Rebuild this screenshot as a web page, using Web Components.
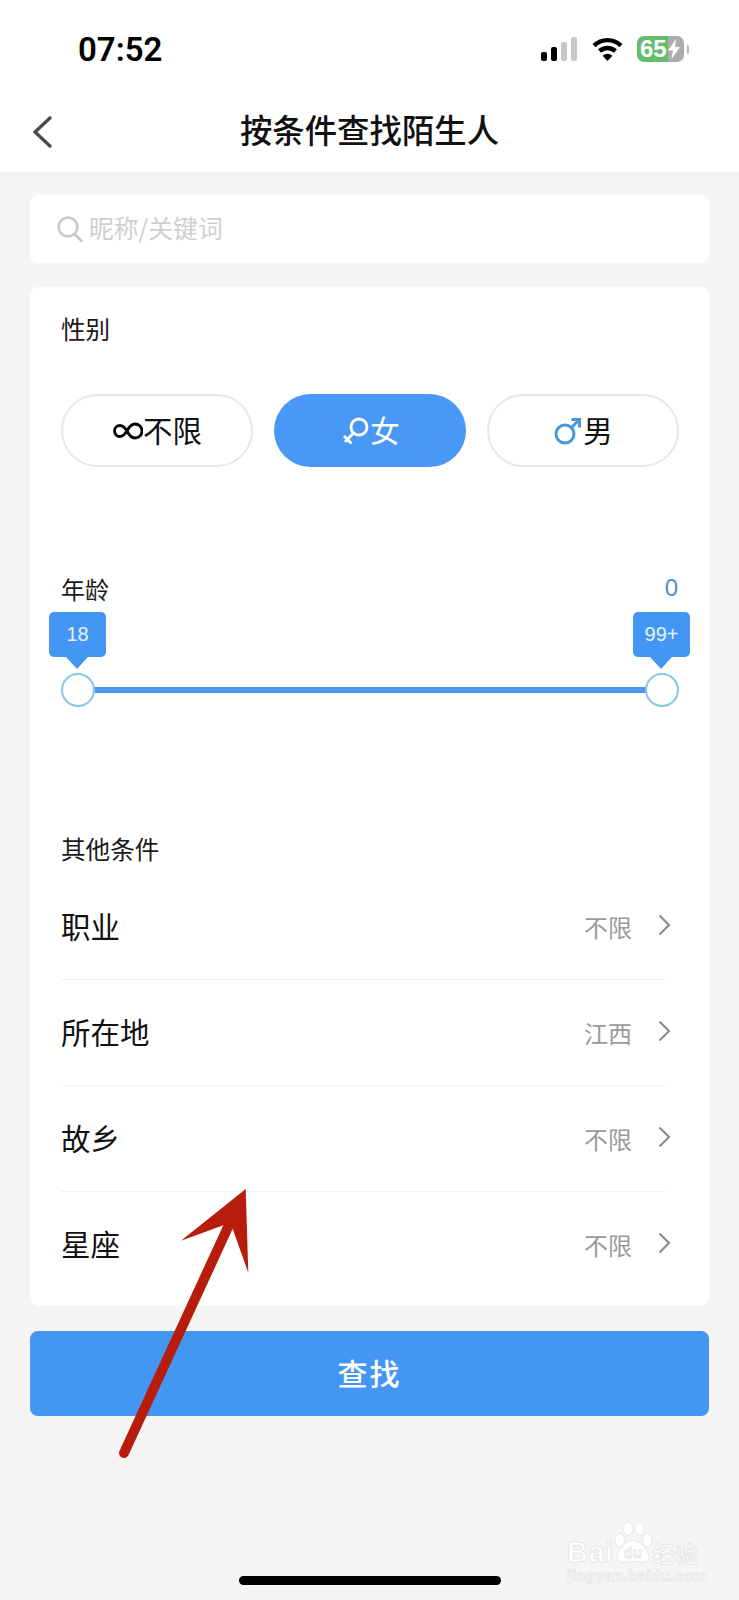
<!DOCTYPE html>
<html lang="zh-CN">
<head>
<meta charset="UTF-8">
<meta name="viewport" content="width=device-width, initial-scale=1.0">
<title>按条件查找陌生人</title>
<style>
html, body { margin: 0; padding: 0; }
body {
    position: relative;
    width: 739px;
    height: 1600px;
    overflow: hidden;
    background: #f5f5f5;
    font-family: "Noto Sans CJK SC", "Noto Sans", sans-serif;
    color: #111;
}
</style>
</head>
<body>
<status-bar time="07:52" battery="65"></status-bar>
<nav-bar>按条件查找陌生人</nav-bar>
<search-box>昵称/关键词</search-box>
<filter-card>
    <section-label slot="gender-label" style="padding-top:24px">性别</section-label>
    <gender-pill slot="gender" icon="any">不限</gender-pill>
    <gender-pill slot="gender" icon="female" active>女</gender-pill>
    <gender-pill slot="gender" icon="male">男</gender-pill>
    <age-slider slot="age" low="18" high="99+" count="0"></age-slider>
    <section-label slot="other-label">其他条件</section-label>
    <filter-row slot="rows" value="不限">职业</filter-row>
    <filter-row slot="rows" value="江西">所在地</filter-row>
    <filter-row slot="rows" value="不限">故乡</filter-row>
    <filter-row slot="rows" value="不限" last>星座</filter-row>
</filter-card>
<primary-button>查找</primary-button>
<home-indicator></home-indicator>
<arrow-mark></arrow-mark>
<baidu-mark></baidu-mark>

<script>
class StatusBar extends HTMLElement {
    constructor() {
        super();
        const time = this.getAttribute('time');
        const battery = this.getAttribute('battery');
        this.attachShadow({mode: 'open'}).innerHTML = `
        <style>
        :host { display: flex; align-items: center; height: 92px; padding: 6px 50px 0 78px; box-sizing: border-box; background: #fff; }
        .time { font: 600 33px/1 Roboto, "Liberation Sans", sans-serif; color: #000; flex: 1; }
        .icons { display: flex; align-items: center; }
        .wifi { margin: 0 14px 0 15px; }
        .battery { position: relative; width: 47px; height: 26px; border-radius: 7px; overflow: hidden; background: linear-gradient(90deg, #63bd6c 0 31px, #adadad 31px); color: #fff; font: 700 24px/26px "Liberation Sans", sans-serif; padding-left: 3px; box-sizing: border-box; }
        .bolt { position: absolute; left: 30px; top: 3px; }
        .cap { width: 2px; height: 9px; margin-left: 3px; background: #b5b5b5; border-radius: 0 2px 2px 0; }
        </style>
        <div class="time">${time}</div>
        <div class="icons">
            <svg width="36" height="24" viewBox="0 0 36 24">
                <rect x="0" y="15" width="6" height="9" rx="2" fill="#000"/>
                <rect x="10" y="10" width="6" height="14" rx="2" fill="#000"/>
                <rect x="20" y="5" width="6" height="19" rx="2" fill="#c8c8c8"/>
                <rect x="30" y="0" width="6" height="24" rx="2" fill="#c8c8c8"/>
            </svg>
            <svg class="wifi" width="31" height="24" viewBox="0 0 31 24" fill="none" stroke="#000" stroke-width="4.4">
                <path d="M2 8.6A19.5 19.5 0 0 1 29 8.6"/>
                <path d="M7.6 14.2A11.5 11.5 0 0 1 23.4 14.2"/>
                <path d="M15.5 24L10.6 18.7A7.4 7.4 0 0 1 20.4 18.7Z" fill="#000" stroke="none"/>
            </svg>
            <div class="battery">${battery}
                <svg class="bolt" width="14" height="20" viewBox="0 0 14 20"><path d="M9 0L1 11.5H6L4.5 20L13 8H8Z" fill="#fff"/></svg>
            </div>
            <div class="cap"></div>
        </div>`;
    }
}
customElements.define('status-bar', StatusBar);

class NavBar extends HTMLElement {
    constructor() {
        super();
        this.attachShadow({mode: 'open'}).innerHTML = `
        <style>
        :host { display: flex; align-items: center; height: 80px; background: #fff; padding-left: 32px; font-size: 32.4px; font-weight: 500; color: #111; }
        svg { flex: none; }
        .title { flex: 1; text-align: center; margin: 0 0 6px -53px; line-height: 74px; }
        </style>
        <svg width="21" height="34" viewBox="0 0 21 34" fill="none" stroke="#484848" stroke-width="3.2"><path d="M19 2L3 17L19 32"/></svg>
        <div class="title"><slot></slot></div>`;
    }
}
customElements.define('nav-bar', NavBar);

class SearchBox extends HTMLElement {
    constructor() {
        super();
        this.attachShadow({mode: 'open'}).innerHTML = `
        <style>
        :host { display: flex; align-items: center; height: 68px; margin: 23px 30px 0 30px; padding-left: 27px; background: #fff; border-radius: 8px; color: #cfcfcf; font-size: 24.8px; }
        svg { margin-right: 6px; }
        span { padding-bottom: 4px; }
        </style>
        <svg width="26" height="26" viewBox="0 0 26 26" fill="none" stroke="#c9c9c9" stroke-width="2.6">
            <circle cx="11" cy="11" r="9.4"/><path d="M17.6 18L24.5 25" stroke-linecap="round"/>
        </svg>
        <span><slot></slot></span>`;
    }
}
customElements.define('search-box', SearchBox);

class FilterCard extends HTMLElement {
    constructor() {
        super();
        this.attachShadow({mode: 'open'}).innerHTML = `
        <style>
        :host { display: flow-root; height: 1019px; margin: 24px 30px 0 30px; background: #fff; border-radius: 8px; box-sizing: border-box; }
        .gender { display: flex; justify-content: space-between; margin: 49px 30px 0 31px; }
        .age { display: block; margin-top: 105px; }
        .other { display: block; margin-top: 124px; }
        .rows { margin: 9px 43px 0 31px; }
        </style>
        <slot name="gender-label"></slot>
        <div class="gender"><slot name="gender"></slot></div>
        <div class="age"><slot name="age"></slot></div>
        <div class="other"><slot name="other-label"></slot></div>
        <div class="rows"><slot name="rows"></slot></div>`;
    }
}
customElements.define('filter-card', FilterCard);

class SectionLabel extends HTMLElement {
    constructor() {
        super();
        this.attachShadow({mode: 'open'}).innerHTML = `
        <style>
        :host { display: block; margin-left: 31px; font-size: 24.6px; line-height: 34px; color: #1a1a1a; }
        </style>
        <slot></slot>`;
    }
}
customElements.define('section-label', SectionLabel);

class GenderPill extends HTMLElement {
    static icon(name) {
        switch(name) {
            case 'female':
                return `<svg width="30" height="32" viewBox="0 0 30 32" fill="none" stroke="#fff" stroke-width="2.8">
                    <circle cx="19" cy="12" r="8"/><path d="M13.5 18L5 27M4 21L11.5 28.5"/></svg>`;
            case 'male':
                return `<svg width="30" height="30" viewBox="0 0 30 30" fill="none" stroke="#4a98dc" stroke-width="3">
                    <circle cx="12" cy="18" r="9"/><path d="M18.5 11.5L26 4M18.5 3.5H26.5V11.5"/></svg>`;
            default:
                return `<svg width="31" height="18" viewBox="0 0 31 18" fill="none" stroke="#000" stroke-width="2.8">
                    <path d="M15 9C12.5 5 10.5 3.5 8 3.5A5.5 5.5 0 0 0 8 14.5C10.5 14.5 12.5 13 15 9C17.5 4 20 2 23 2A7 7 0 0 1 23 16C20 16 17.5 14 15 9Z"/></svg>`;
        }
    }

    constructor() {
        super();
        const active = this.hasAttribute('active');
        this.attachShadow({mode: 'open'}).innerHTML = `
        <style>
        :host { display: flex; align-items: center; justify-content: center; width: 192px; height: 73px; box-sizing: border-box; border-radius: 37px; font-size: 29.5px;
            background: ${active ? '#4a98f5' : '#fff'}; color: ${active ? '#fff' : '#111'}; border: ${active ? '0' : '2px solid #e8e8e8'}; }
        svg { flex: none; }
        span { padding-bottom: 4px; }
        </style>
        ${GenderPill.icon(this.getAttribute('icon'))}<span><slot></slot></span>`;
    }
}
customElements.define('gender-pill', GenderPill);

class AgeSlider extends HTMLElement {
    constructor() {
        super();
        const low = this.getAttribute('low');
        const high = this.getAttribute('high');
        const count = this.getAttribute('count');
        this.attachShadow({mode: 'open'}).innerHTML = `
        <style>
        :host { display: block; }
        .head { display: flex; justify-content: space-between; margin: 0 31px; font-size: 24px; line-height: 34px; color: #1a1a1a; }
        .count { color: #4a90d0; font-family: "Liberation Sans", sans-serif; margin-top: -1px; }
        .slider { position: relative; display: flex; justify-content: space-between; margin: 6px 19px 0 19px; }
        .track { position: absolute; left: 29px; right: 29px; bottom: 14px; height: 6px; background: #4a98f0; }
        .thumb { position: relative; display: flex; flex-direction: column; align-items: center; width: 57px; }
        .tip { position: relative; width: 57px; height: 45px; border-radius: 5px; background: #4496f5; color: #e8f2ff; font: 20px/44px "Liberation Sans", sans-serif; text-align: center; margin-bottom: 16px; }
        .tip::after { content: ""; position: absolute; left: 17px; top: 45px; border: 11.5px solid transparent; border-top: 12px solid #4496f5; border-bottom: 0; }
        .knob { position: relative; width: 34px; height: 34px; box-sizing: border-box; border-radius: 50%; background: #fff; border: 2px solid #86c8e4; }
        </style>
        <div class="head"><span>年龄</span><span class="count">${count}</span></div>
        <div class="slider">
            <div class="track"></div>
            <div class="thumb"><div class="tip">${low}</div><div class="knob"></div></div>
            <div class="thumb"><div class="tip">${high}</div><div class="knob"></div></div>
        </div>`;
    }
}
customElements.define('age-slider', AgeSlider);

class FilterRow extends HTMLElement {
    constructor() {
        super();
        const value = this.getAttribute('value');
        const last = this.hasAttribute('last');
        this.attachShadow({mode: 'open'}).innerHTML = `
        <style>
        :host { display: flex; align-items: center; height: 106px; box-sizing: border-box; padding-bottom: 4px; font-size: 29.5px; color: #111; border-bottom: ${last ? '0' : '1px solid #f0f0f0'}; }
        .name { flex: 1; }
        .value { font-size: 24px; color: #9a9a9a; margin: 3px 26px 0 0; }
        svg { margin-right: -5px; flex: none; }
        </style>
        <span class="name"><slot></slot></span>
        <span class="value">${value}</span>
        <svg width="13" height="22" viewBox="0 0 13 22" fill="none" stroke="#8e8e8e" stroke-width="2.2"><path d="M1.5 1.5L11 11L1.5 20.5"/></svg>`;
    }
}
customElements.define('filter-row', FilterRow);

class PrimaryButton extends HTMLElement {
    constructor() {
        super();
        this.attachShadow({mode: 'open'}).innerHTML = `
        <style>
        :host { display: flex; align-items: center; justify-content: center; height: 85px; box-sizing: border-box; padding-bottom: 3px; margin: 25px 30px 0 30px; border-radius: 8px; background: #4496f5; color: #fff; font-size: 30px; font-weight: 500; letter-spacing: 2px; }
        </style>
        <slot></slot>`;
    }
}
customElements.define('primary-button', PrimaryButton);

class HomeIndicator extends HTMLElement {
    constructor() {
        super();
        this.attachShadow({mode: 'open'}).innerHTML = `
        <style>
        :host { display: block; width: 262px; height: 9px; margin: 160px 0 0 239px; border-radius: 5px; background: #000; }
        </style>`;
    }
}
customElements.define('home-indicator', HomeIndicator);

// red annotation drawn on top of the screenshot
class ArrowMark extends HTMLElement {
    constructor() {
        super();
        this.attachShadow({mode: 'open'}).innerHTML = `
        <style>
        :host { position: absolute; left: 0; top: 0; pointer-events: none; }
        svg { display: block; }
        </style>
        <svg width="739" height="1600" viewBox="0 0 739 1600">
            <path d="M124 1453L228 1227" stroke="#b71c0c" stroke-width="10" stroke-linecap="round" fill="none"/>
            <path d="M245.7 1189L181 1240.7L224 1225L232.7 1229L248.3 1272.7Z" fill="#b71c0c"/>
        </svg>`;
    }
}
customElements.define('arrow-mark', ArrowMark);

class BaiduMark extends HTMLElement {
    constructor() {
        super();
        this.attachShadow({mode: 'open'}).innerHTML = `
        <style>
        :host { position: absolute; left: 567px; top: 1520px; width: 135px; color: #fff; -webkit-text-stroke: 1px #e6e6e6; }
        .top { display: flex; align-items: flex-end; height: 46px; font: 700 29px/28px "Liberation Sans", sans-serif; letter-spacing: 0.5px; }
        .top svg { margin: 0 0 0 -1px; flex: none; }
        .top span:last-child { font: 700 22px/28px "Noto Sans CJK SC", sans-serif; }
        .url { font: 700 15px/18px "Liberation Sans", sans-serif; letter-spacing: 0.5px; margin-top: 1px; white-space: nowrap; }
        </style>
        <div class="top">
            <span>Bai</span>
            <svg width="40" height="46" viewBox="0 0 42 46" fill="#fff" stroke="#e6e6e6" stroke-width="1">
                <ellipse cx="7" cy="20" rx="5" ry="7"/><ellipse cx="16" cy="8" rx="5" ry="7"/><ellipse cx="28" cy="8" rx="5" ry="7"/><ellipse cx="36" cy="20" rx="5" ry="7"/>
                <path d="M21 20C29 20 38 32 38 38C38 44 30 44 21 42C12 44 4 44 4 38C4 32 13 20 21 20Z"/>
                <text x="21" y="39" text-anchor="middle" font-family="Liberation Sans" font-weight="700" font-size="15">du</text>
            </svg>
            <span>经验</span>
        </div>
        <div class="url">jingyan.baidu.com</div>`;
    }
}
customElements.define('baidu-mark', BaiduMark);
</script>
</body>
</html>
